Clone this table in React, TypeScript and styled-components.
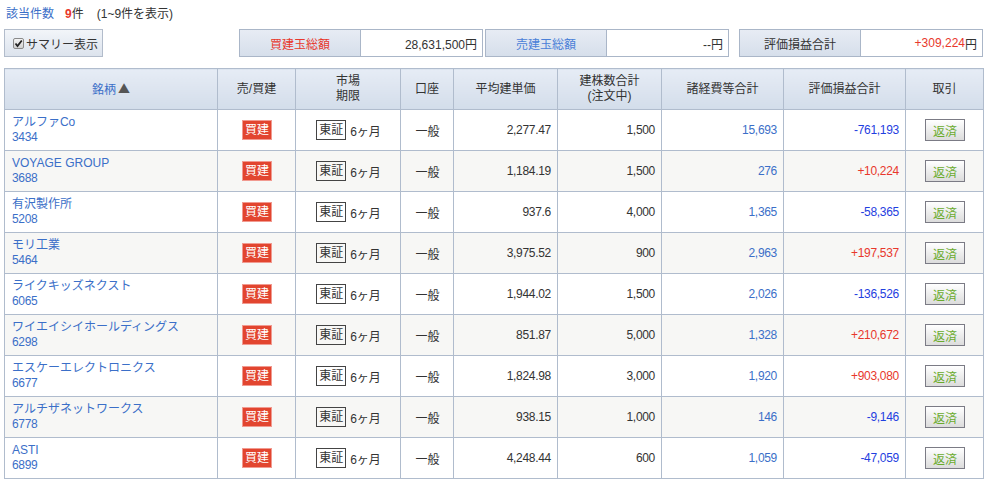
import React from "react";
import styled, { createGlobalStyle } from "styled-components";

const Global = createGlobalStyle`
  html, body { margin: 0; padding: 0; background: #fff; }
  body {
    font-family: "Liberation Sans", "Noto Sans CJK JP", sans-serif;
    font-size: 12px;
    color: #333;
  }
`;

const Page = styled.div`
  padding: 4px 4px 0 4px;
  width: 992px;
  box-sizing: border-box;
`;

const CountLine = styled.div`
  height: 20px;
  line-height: 20px;
  padding-left: 2px;
  display: flex;
  align-items: center;
`;

const CountLabel = styled.span`
  color: #3b6fc8;
  margin-right: 11px;
`;

const CountNum = styled.span`
  color: #e8382c;
  font-weight: bold;
`;

const CountNote = styled.span`
  margin-left: 13px;
`;

const SummaryBar = styled.div`
  margin-top: 5px;
  display: flex;
  align-items: stretch;
  height: 28px;
  white-space: nowrap;
`;

const SummaryButton = styled.div`
  flex: 0 0 99px;
  box-sizing: border-box;
  border: 1px solid #b2bccb;
  background: linear-gradient(#f2f5f9, #dce3ed);
  display: flex;
  align-items: center;
  padding-left: 8px;
  gap: 2px;
  color: #333;
  margin-right: 136px;
`;

const Check = styled.span`
  width: 11px;
  height: 11px;
  box-sizing: border-box;
  border: 1px solid #8a8a8a;
  border-radius: 2px;
  background: linear-gradient(#f4f4f4, #d2d2d2);
  display: inline-flex;
  align-items: center;
  justify-content: center;
`;

const PairGroup = styled.div<{ $gap: number }>`
  display: flex;
  flex-shrink: 0;
  margin-right: ${(p) => p.$gap}px;
`;

const Pair = styled.div`
  display: flex;
  flex-shrink: 0;
  border: 1px solid #aab6c8;
  margin-right: 2px;
  &:last-child { margin-right: 0; }
`;

const PairLabel = styled.div<{ $color: string }>`
  width: 121px;
  box-sizing: border-box;
  background: linear-gradient(#e7ecf4, #d6dfeb);
  color: ${(p) => p.$color};
  display: flex;
  align-items: center;
  justify-content: center;
  border-right: 1px solid #aab6c8;
`;

const PairValue = styled.div`
  width: 121px;
  box-sizing: border-box;
  padding-right: 5px;
  display: flex;
  align-items: center;
  justify-content: flex-end;
  background: #fff;
`;

const Red = styled.span`
  color: #e8382c;
`;

const Table = styled.table`
  margin-top: 11px;
  border-collapse: collapse;
  table-layout: fixed;
  width: 979px;
`;

const Th = styled.th<{ $link?: boolean }>`
  height: 40px;
  padding: 0;
  border: 1px solid #b0bccd;
  background: linear-gradient(#e6ecf5, #d3ddea);
  font-weight: normal;
  color: ${(p) => (p.$link ? "#3b6fc8" : "#333")};
  line-height: 15px;
  text-align: center;
  vertical-align: middle;
`;

const Arrow = styled.span`
  color: #555;
  margin-left: 2px;
  font-family: "Noto Sans CJK JP", sans-serif;
  font-size: 12px;
`;

const Tr = styled.tr<{ $alt: boolean }>`
  background: ${(p) => (p.$alt ? "#f7f7f5" : "#fff")};
`;

const Td = styled.td<{ $align?: string; $color?: string }>`
  height: 40px;
  padding: 0 6px 0 7px;
  border: 1px solid #b0bccd;
  text-align: ${(p) => p.$align || "center"};
  color: ${(p) => p.$color || "#333"};
  vertical-align: middle;
  white-space: nowrap;
`;

const NumTd = styled(Td)`
  letter-spacing: -0.3px;
`;

const NameLink = styled.div`
  color: #3b6fc8;
  line-height: 15px;
  margin-top: -2px;
`;

const Code = styled.div`
  color: #3b6fc8;
  line-height: 14px;
  letter-spacing: -0.3px;
`;

const BuyBadge = styled.span`
  display: inline-block;
  width: 30px;
  height: 20px;
  box-sizing: border-box;
  line-height: 18px;
  background: #e2452f;
  border: 1px solid #f19a90;
  color: #fff;
  text-align: center;
  font-size: 12px;
`;

const Market = styled.div`
  display: flex;
  align-items: center;
  justify-content: center;
  gap: 4px;
`;

const MarketBox = styled.span`
  display: inline-block;
  width: 30px;
  height: 20px;
  box-sizing: border-box;
  border: 1px solid #444;
  line-height: 18px;
  text-align: center;
  color: #333;
`;

const RepayButton = styled.button`
  width: 40px;
  height: 22px;
  box-sizing: border-box;
  border: 1px solid #7b7b85;
  background: linear-gradient(#ffffff, #dcdcdc);
  color: #6aab2c;
  font-family: "Liberation Sans", "Noto Sans CJK JP", sans-serif;
  font-size: 12px;
  padding: 0;
  cursor: pointer;
`;

type Row = {
  name: string;
  code: string;
  avg: string;
  qty: string;
  fee: string;
  pl: string;
};

const rows: Row[] = [
  { name: "アルファCo", code: "3434", avg: "2,277.47", qty: "1,500", fee: "15,693", pl: "-761,193" },
  { name: "VOYAGE GROUP", code: "3688", avg: "1,184.19", qty: "1,500", fee: "276", pl: "+10,224" },
  { name: "有沢製作所", code: "5208", avg: "937.6", qty: "4,000", fee: "1,365", pl: "-58,365" },
  { name: "モリ工業", code: "5464", avg: "3,975.52", qty: "900", fee: "2,963", pl: "+197,537" },
  { name: "ライクキッズネクスト", code: "6065", avg: "1,944.02", qty: "1,500", fee: "2,026", pl: "-136,526" },
  { name: "ワイエイシイホールディングス", code: "6298", avg: "851.87", qty: "5,000", fee: "1,328", pl: "+210,672" },
  { name: "エスケーエレクトロニクス", code: "6677", avg: "1,824.98", qty: "3,000", fee: "1,920", pl: "+903,080" },
  { name: "アルチザネットワークス", code: "6778", avg: "938.15", qty: "1,000", fee: "146", pl: "-9,146" },
  { name: "ASTI", code: "6899", avg: "4,248.44", qty: "600", fee: "1,059", pl: "-47,059" },
];

const widths = [213, 78, 105, 53, 104, 104, 122, 122, 78];

export default function App() {
  return (
    <Page>
      <Global />
      <CountLine>
        <CountLabel>該当件数</CountLabel>
        <CountNum>9</CountNum>
        <span>件</span>
        <CountNote>(1~9件を表示)</CountNote>
      </CountLine>
      <SummaryBar>
        <SummaryButton>
          <Check>
            <svg width="9" height="9" viewBox="0 0 9 9">
              <path d="M1.5 4.5 L3.5 7 L7.8 1.5" stroke="#222" strokeWidth="1.8" fill="none" />
            </svg>
          </Check>
          <span>サマリー表示</span>
        </SummaryButton>
        <PairGroup $gap={10}>
          <Pair>
            <PairLabel $color="#e8382c">買建玉総額</PairLabel>
            <PairValue>28,631,500円</PairValue>
          </Pair>
          <Pair>
            <PairLabel $color="#4a80d8">売建玉総額</PairLabel>
            <PairValue>--円</PairValue>
          </Pair>
        </PairGroup>
        <PairGroup $gap={0}>
          <Pair>
            <PairLabel $color="#333">評価損益合計</PairLabel>
            <PairValue>
              <Red>+309,224</Red>円
            </PairValue>
          </Pair>
        </PairGroup>
      </SummaryBar>
      <Table>
        <colgroup>
          {widths.map((w, i) => (
            <col key={i} style={{ width: w }} />
          ))}
        </colgroup>
        <thead>
          <tr>
            <Th $link>
              銘柄<Arrow>▲</Arrow>
            </Th>
            <Th>売/買建</Th>
            <Th>
              市場
              <br />
              期限
            </Th>
            <Th>口座</Th>
            <Th>平均建単価</Th>
            <Th>
              建株数合計
              <br />
              (注文中)
            </Th>
            <Th>諸経費等合計</Th>
            <Th>評価損益合計</Th>
            <Th>取引</Th>
          </tr>
        </thead>
        <tbody>
          {rows.map((r, i) => (
            <Tr key={r.code} $alt={i % 2 === 1}>
              <Td $align="left">
                <NameLink>{r.name}</NameLink>
                <Code>{r.code}</Code>
              </Td>
              <Td>
                <BuyBadge>買建</BuyBadge>
              </Td>
              <Td>
                <Market>
                  <MarketBox>東証</MarketBox>
                  <span>6ヶ月</span>
                </Market>
              </Td>
              <Td>一般</Td>
              <NumTd $align="right">{r.avg}</NumTd>
              <NumTd $align="right">{r.qty}</NumTd>
              <NumTd $align="right" $color="#3b6fc8">
                {r.fee}
              </NumTd>
              <NumTd $align="right" $color={r.pl.startsWith("+") ? "#e8382c" : "#1f40e0"}>
                {r.pl}
              </NumTd>
              <Td>
                <RepayButton>返済</RepayButton>
              </Td>
            </Tr>
          ))}
        </tbody>
      </Table>
    </Page>
  );
}
